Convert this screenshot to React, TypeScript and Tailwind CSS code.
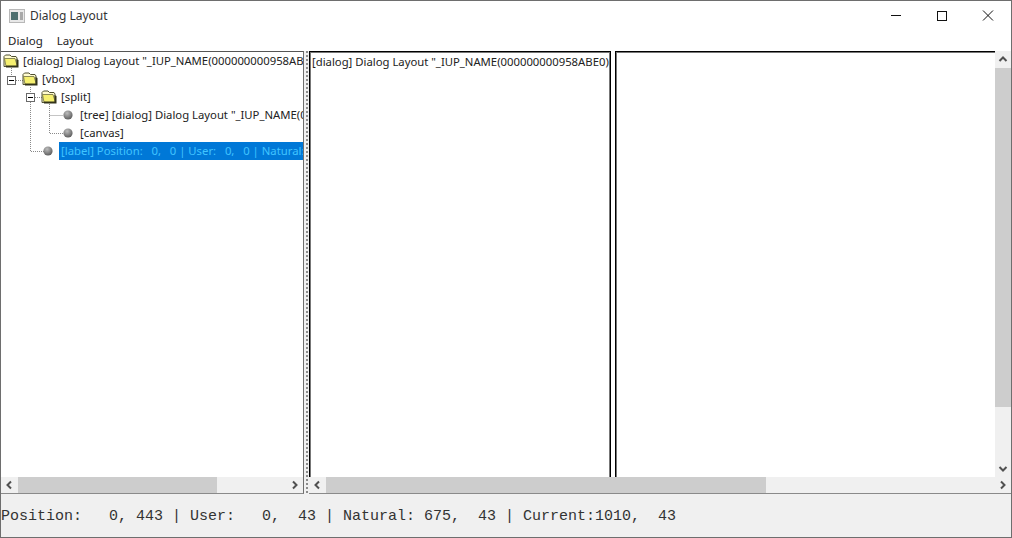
const uiFont = { fontFamily: '"Noto Sans", "Liberation Sans", sans-serif' };

function Folder() {
  return (
    <svg width="16" height="14" viewBox="0 0 16 14" className="shrink-0">
      <path d="M1 12.5 V2.5 L2.5 1 H7 L8.5 2.5 H13 L14 4 V12.5 Z" fill="#fffbd0" stroke="#4f4f32" />
      <path d="M1.5 4.5 H12 L14.5 12.5 H3 Z" fill="#f6f070" stroke="#6f6f42" strokeWidth="0.8" />
      <path d="M3 13.5 H15.5 V6 L13.5 5 V11.5 H3 Z" fill="#33331a" />
    </svg>
  );
}

function Bullet() {
  return (
    <svg width="10" height="10" viewBox="0 0 10 10" className="shrink-0">
      <defs>
        <radialGradient id="ball" cx="40%" cy="30%" r="70%">
          <stop offset="0%" stopColor="#bdbdbd" />
          <stop offset="100%" stopColor="#5e5e5e" />
        </radialGradient>
      </defs>
      <circle cx="5" cy="5" r="4.6" fill="url(#ball)" />
    </svg>
  );
}

function TreeLines() {
  const dots = { stroke: "#8a8a8a", strokeDasharray: "1 1", fill: "none" };
  return (
    <svg width="100" height="110" className="absolute left-0 top-0">
      <path d="M10.5 16 V24 M15 28.5 H22" {...dots} />
      <path d="M29.5 35 V41 M34 45.5 H41 M29.5 50 V99.5 H43" {...dots} />
      <path d="M48.5 52 V81.5 H62 M48.5 63.5 H62" {...dots} />
      <rect x="6.5" y="24.5" width="8" height="8" fill="#fff" stroke="#6a6a6a" />
      <path d="M8 28.5 H13" stroke="#000" />
      <rect x="25.5" y="41.5" width="8" height="8" fill="#fff" stroke="#6a6a6a" />
      <path d="M27 45.5 H32" stroke="#000" />
    </svg>
  );
}

function Arrow({ dir }: { dir: "up" | "down" | "left" | "right" }) {
  const d = {
    up: "M1.5 6 L5 2.5 L8.5 6",
    down: "M1.5 3 L5 6.5 L8.5 3",
    left: "M6 1.5 L2.5 5 L6 8.5",
    right: "M3 1.5 L6.5 5 L3 8.5",
  }[dir];
  return (
    <svg width="10" height="10" viewBox="0 0 10 10" className="shrink-0">
      <path d={d} fill="none" stroke="#505050" strokeWidth="2" />
    </svg>
  );
}

function HScroll({ thumb }: { thumb: string }) {
  return (
    <div className="h-4 shrink-0 flex items-stretch bg-[#f0f0f0]">
      <div className="w-[17px] shrink-0 flex items-center justify-center">
        <Arrow dir="left" />
      </div>
      <div className={`${thumb} bg-[#cdcdcd]`} />
      <div className="flex-1" />
      <div className="w-[17px] shrink-0 flex items-center justify-center">
        <Arrow dir="right" />
      </div>
    </div>
  );
}

function TreeRow({ pad, icon, label, selected }: { pad: string; icon: React.ReactNode; label: string; selected?: boolean }) {
  return (
    <div className={`h-[18px] flex items-center ${pad}`}>
      <div className="w-[19px] shrink-0 flex items-center">{icon}</div>
      <div
        className={
          selected
            ? "flex-1 h-[18px] leading-[18px] pl-[2px] bg-[#0078d7] text-[#40c4ff] whitespace-pre overflow-hidden"
            : "pl-[1px] whitespace-pre"
        }
      >
        {label}
      </div>
    </div>
  );
}

export default function App() {
  return (
    <div
      className="w-[1012px] h-[538px] flex flex-col bg-white border border-[#6e6e6e] overflow-hidden text-[11.3px] text-[#222]"
      style={uiFont}
    >
      {/* title bar */}
      <div className="h-[29px] flex items-center shrink-0">
        <svg width="16" height="14" viewBox="0 0 16 14" className="ml-2 shrink-0">
          <rect x="0.5" y="0.5" width="15" height="13" fill="#e8e8e8" stroke="#b8b8b8" />
          <rect x="2" y="3" width="7" height="8" fill="#4d6f6f" />
          <rect x="11" y="3" width="3" height="8" fill="#a8a8a8" />
        </svg>
        <span className="ml-[5px] text-[12px] text-[#333]">Dialog Layout</span>
        <div className="ml-auto flex items-center">
          <svg width="46" height="29" viewBox="0 0 46 29">
            <path d="M18 14.5 H28" stroke="#111" />
          </svg>
          <svg width="46" height="29" viewBox="0 0 46 29">
            <rect x="18.5" y="10.5" width="9" height="9" fill="none" stroke="#111" />
          </svg>
          <svg width="46" height="29" viewBox="0 0 46 29">
            <path d="M18 9.5 L28 19.5 M28 9.5 L18 19.5" stroke="#111" />
          </svg>
        </div>
      </div>

      {/* menu */}
      <div className="h-[21px] flex items-center gap-[14px] pl-[7px] shrink-0 text-[11.5px]">
        <span>Dialog</span>
        <span>Layout</span>
      </div>

      {/* split area */}
      <div className="h-[443px] flex shrink-0">
        <div className="w-[303px] shrink-0 flex flex-col border-t border-r border-b border-t-[#555] border-r-[#6e6e6e] border-b-[#8a8a8a]">
          <div className="flex-1 relative overflow-hidden">
            <TreeLines />
            <div className="relative">
              <TreeRow pad="pl-[2px]" icon={<Folder />} label={'[dialog] Dialog Layout "_IUP_NAME(000000000958ABE0)"'} />
              <TreeRow pad="pl-[21px]" icon={<Folder />} label="[vbox]" />
              <TreeRow pad="pl-[40px]" icon={<Folder />} label="[split]" />
              <TreeRow pad="pl-[59px]" icon={<div className="pl-[3px]"><Bullet /></div>} label={'[tree] [dialog] Dialog Layout "_IUP_NAME(000000000958ABE0)"'} />
              <TreeRow pad="pl-[59px]" icon={<div className="pl-[3px]"><Bullet /></div>} label="[canvas]" />
              <TreeRow pad="pl-[39px]" icon={<div className="pl-[3px]"><Bullet /></div>} label="[label] Position:   0,   0 | User:   0,   0 | Natural: 675, 43" selected />
            </div>
          </div>
          <HScroll thumb="w-[199px]" />
        </div>

        {/* sash */}
        <div className="w-[5px] shrink-0 flex justify-center bg-[#f0f0f0]">
          <div className="w-[2px] h-full bg-[repeating-linear-gradient(to_bottom,#8c8c8c_0,#8c8c8c_2px,transparent_2px,transparent_4px)]" />
        </div>

        <div className="flex-1 flex flex-col border-b border-[#8a8a8a] min-w-0">
          <div className="flex-1 flex min-h-0">
            <div className="w-[302px] shrink-0 border-l border-t border-r border-black shadow-[inset_1px_1px_0_#777,inset_-1px_0_0_#777] whitespace-pre overflow-hidden pl-[2px] pt-[2px]">
              {'[dialog] Dialog Layout "_IUP_NAME(000000000958ABE0)'}
            </div>
            <div className="w-[4px] shrink-0" />
            <div className="flex-1 border-l border-t border-black shadow-[inset_1px_1px_0_#777]" />
            <div className="w-4 shrink-0 flex flex-col bg-[#f0f0f0]">
              <div className="h-[17px] flex items-center justify-center">
                <Arrow dir="up" />
              </div>
              <div className="h-[339px] bg-[#cdcdcd]" />
              <div className="flex-1" />
              <div className="h-[17px] flex items-center justify-center">
                <Arrow dir="down" />
              </div>
            </div>
          </div>
          <HScroll thumb="w-[440px]" />
        </div>
      </div>

      {/* status label */}
      <div
        className="flex-1 flex items-center pt-[4px] bg-[#f0f0f0] text-[15px] whitespace-pre text-[#333]"
        style={{ fontFamily: '"Liberation Mono", monospace' }}
      >
        Position:   0, 443 | User:   0,  43 | Natural: 675,  43 | Current:1010,  43
      </div>
    </div>
  );
}
